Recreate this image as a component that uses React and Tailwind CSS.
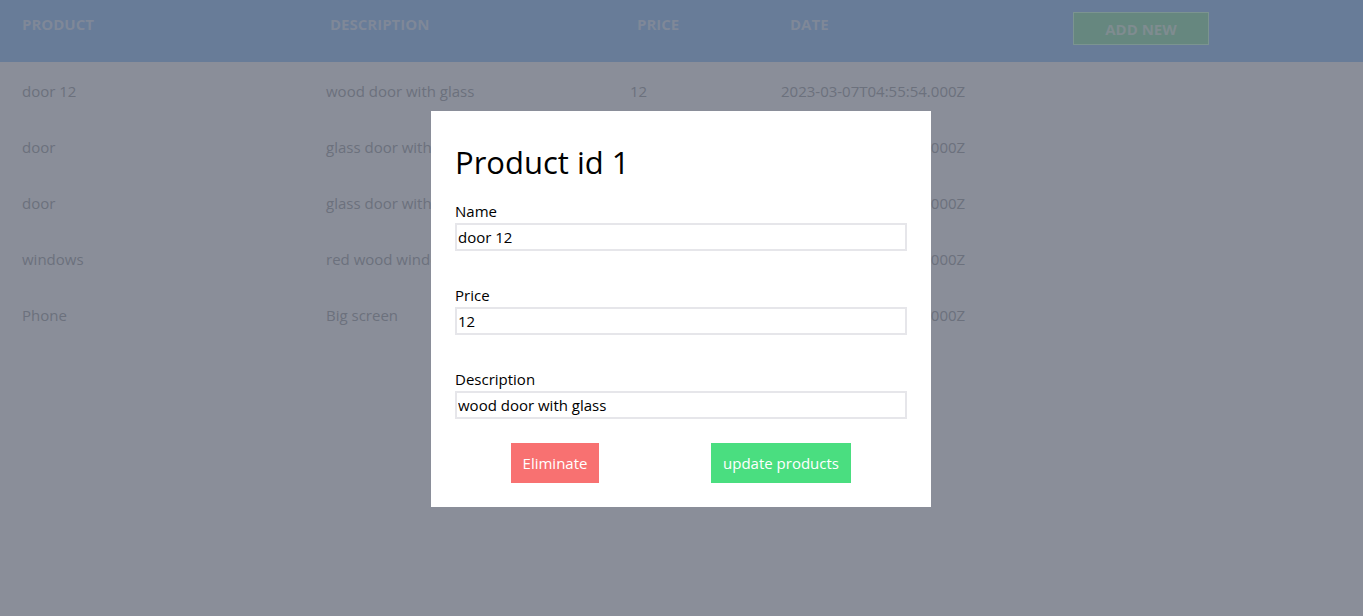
import { useState } from 'react'

const products = [
  { id: 1, name: 'door 12', description: 'wood door with glass', price: 12, date: '2023-03-07T04:55:54.000Z' },
  { id: 2, name: 'door', description: 'glass door with frame', price: 20, date: '2023-03-07T05:01:12.000Z' },
  { id: 3, name: 'door', description: 'glass door with handle', price: 25, date: '2023-03-07T05:02:40.000Z' },
  { id: 4, name: 'windows', description: 'red wood windows', price: 30, date: '2023-03-07T05:04:18.000Z' },
  { id: 5, name: 'Phone', description: 'Big screen', price: 300, date: '2023-03-07T05:06:33.000Z' },
]

const Field = ({ label, value, onChange, first }) => (
  <div className={first ? 'mt-[19px]' : 'mt-[32px]'}>
    <label className="block text-[15px] leading-[24px] text-black">{label}</label>
    <input
      value={value}
      onChange={e => onChange(e.target.value)}
      className="block w-full h-[28px] border-2 border-[#e6e6ea] px-[1px] text-[15px] text-black outline-none"
    />
  </div>
)

export default function App() {
  const current = products[0]
  const [name, setName] = useState(current.name)
  const [price, setPrice] = useState(String(current.price))
  const [description, setDescription] = useState(current.description)

  return (
    <div className="min-h-screen bg-[#8a8e99]" style={{ fontFamily: '"Open Sans", "Noto Sans", sans-serif' }}>
      {/* Header */}
      <div className="h-[62px] bg-[#687c98] pl-[22px] grid grid-cols-[308px_307px_153px_283px_auto]">
        {['PRODUCT', 'DESCRIPTION', 'PRICE', 'DATE'].map(h => (
          <div key={h} className="pt-[13px] text-[15px] leading-[22px] font-bold text-[#7f8898]">{h}</div>
        ))}
        <div className="pt-[12px]">
          <button className="w-[136px] h-[33px] pt-[2px] bg-[#66877f] border border-[#7b9490] text-[15px] font-bold text-[#7f8c90]">
            ADD NEW
          </button>
        </div>
      </div>

      {/* Rows */}
      {products.map(p => (
        <div key={p.id} className="h-[56px] pl-[22px] pt-[2px] grid grid-cols-[304px_304px_151px_auto] items-center text-[15px] text-[#6c717d]">
          <div>{p.name}</div>
          <div>{p.description}</div>
          <div>{p.price}</div>
          <div>{p.date}</div>
        </div>
      ))}

      {/* Modal */}
      <div className="fixed inset-0 pt-[2px] pr-[1px] flex items-center justify-center">
        <div className="w-[500px] h-[396px] bg-white px-[24px] pt-[33px]">
          <h1 className="text-[31px] leading-[36px] text-black">Product id {current.id}</h1>
          <Field first label="Name" value={name} onChange={setName} />
          <Field label="Price" value={price} onChange={setPrice} />
          <Field label="Description" value={description} onChange={setDescription} />
          <div className="mt-[24px] flex justify-around">
            <button className="w-[88px] h-[40px] bg-[#f87171] text-white text-[15px]">Eliminate</button>
            <button className="w-[140px] h-[40px] bg-[#4ade80] text-white text-[15px]">update products</button>
          </div>
        </div>
      </div>
    </div>
  )
}
